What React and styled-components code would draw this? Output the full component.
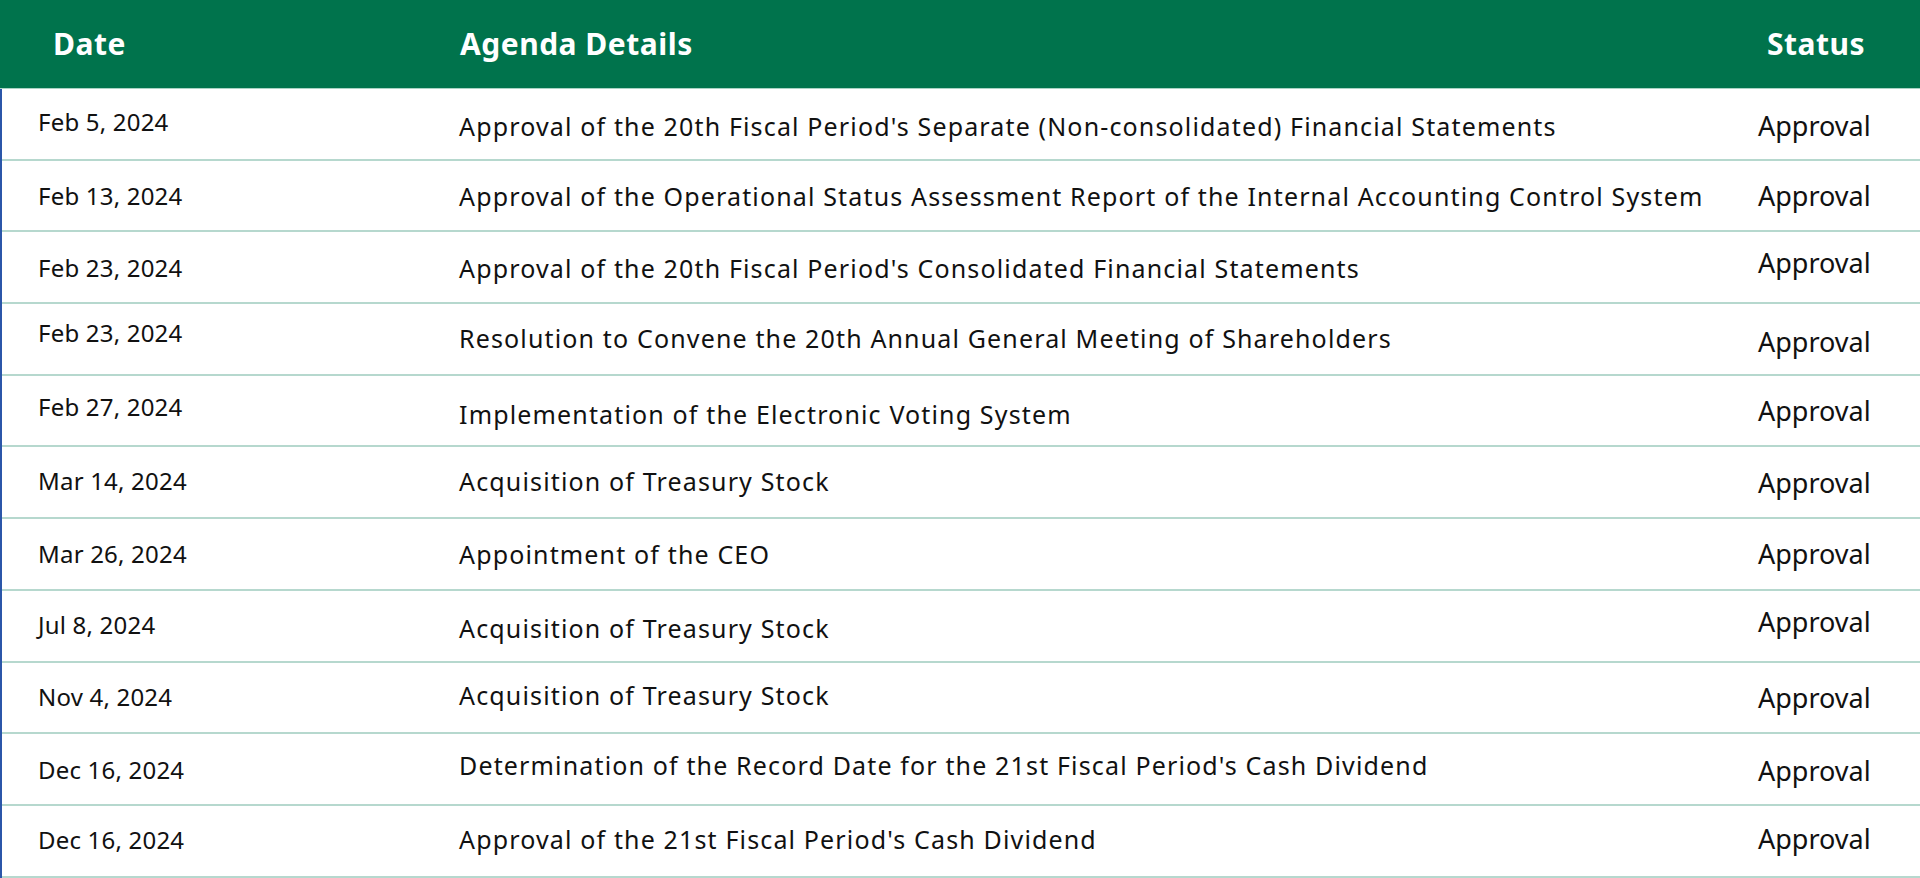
import React from "react"
import styled, { createGlobalStyle } from "styled-components"

const GlobalStyle = createGlobalStyle`
  html, body {
    margin: 0;
    padding: 0;
    background: #ffffff;
  }
  body {
    font-family: "Noto Sans", "Open Sans", sans-serif;
    color: #111;
  }
`

// dy: small vertical nudges per cell, as in the source slide
const agenda = [
  { date: "Feb 5, 2024", title: "Approval of the 20th Fiscal Period's Separate (Non-consolidated) Financial Statements", dy: [-2, 2, 2] },
  { date: "Feb 13, 2024", title: "Approval of the Operational Status Assessment Report of the Internal Accounting Control System", dy: [0, 0, 0] },
  { date: "Feb 23, 2024", title: "Approval of the 20th Fiscal Period's Consolidated Financial Statements", dy: [0, 1, -5] },
  { date: "Feb 23, 2024", title: "Resolution to Convene the 20th Annual General Meeting of Shareholders", dy: [-6, -1, 3] },
  { date: "Feb 27, 2024", title: "Implementation of the Electronic Voting System", dy: [-4, 3, 0] },
  { date: "Mar 14, 2024", title: "Acquisition of Treasury Stock", dy: [-2, -1, 0] },
  { date: "Mar 26, 2024", title: "Appointment of the CEO", dy: [0, 0, 0] },
  { date: "Jul 8, 2024", title: "Acquisition of Treasury Stock", dy: [-1, 2, -4] },
  { date: "Nov 4, 2024", title: "Acquisition of Treasury Stock", dy: [-1, -2, 0] },
  { date: "Dec 16, 2024", title: "Determination of the Record Date for the 21st Fiscal Period's Cash Dividend", dy: [0, -4, 1] },
  { date: "Dec 16, 2024", title: "Approval of the 21st Fiscal Period's Cash Dividend", dy: [-1, -2, -2] },
]

const Table = styled.div`
  width: 1920px;
  display: flex;
  flex-direction: column;
`

const HeaderRow = styled.div`
  display: grid;
  grid-template-columns: 460px 1fr 162px;
  height: 89px;
  background: #00734c;
  border-bottom: 1px solid #a9d3c4;
  box-sizing: border-box;
  align-items: center;
`

const HeadCell = styled.div`
  color: #ffffff;
  font-weight: 700;
  font-size: 30px;
  letter-spacing: 0.5px;
  padding-left: ${(p) => p.$pad || 0}px;
  padding-bottom: 2px;
`

const Body = styled.div`
  border-left: 2px solid #2b56a9;
  display: flex;
  flex-direction: column;
`

const Row = styled.div`
  display: grid;
  grid-template-columns: 457px 1fr 162px;
  height: 71.7px;
  box-sizing: border-box;
  border-bottom: 2px solid #b6d8ce;
`

const Cell = styled.div`
  display: flex;
  align-items: center;
  white-space: nowrap;
  font-size: ${(p) => p.$size}px;
  letter-spacing: ${(p) => p.$track || 0}px;
  padding-left: ${(p) => p.$pad || 0}px;
  padding-top: ${(p) => (p.$dy > 0 ? p.$dy * 2 : 0)}px;
  padding-bottom: ${(p) => (p.$dy < 0 ? -p.$dy * 2 : 0)}px;
`

export default function App() {
  return (
    <>
      <GlobalStyle />
      <Table>
        <HeaderRow>
          <HeadCell $pad={53}>Date</HeadCell>
          <HeadCell>Agenda Details</HeadCell>
          <HeadCell $pad={9}>Status</HeadCell>
        </HeaderRow>
        <Body>
          {agenda.map((item, i) => (
            <Row key={i}>
              <Cell $size={24} $track={0.2} $pad={36} $dy={item.dy[0]}>
                {item.date}
              </Cell>
              <Cell $size={25} $track={1.15} $dy={item.dy[1]}>
                {item.title}
              </Cell>
              <Cell $size={27} $dy={item.dy[2]}>
                Approval
              </Cell>
            </Row>
          ))}
        </Body>
      </Table>
    </>
  )
}
